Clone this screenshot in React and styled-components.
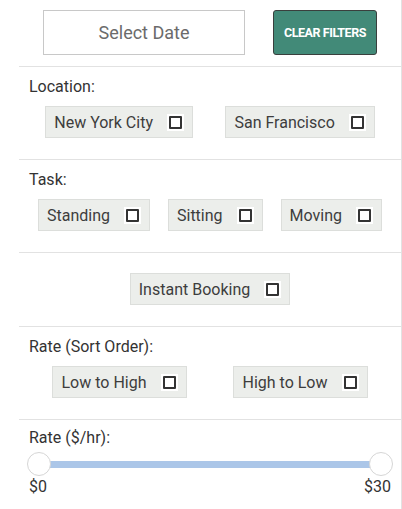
import styled, { createGlobalStyle } from "styled-components";

const Global = createGlobalStyle`
  body {
    margin: 0;
    background: #fff;
    font-family: Roboto, "Liberation Sans", sans-serif;
    color: #333;
  }
`;

export default function App() {
  return (
    <>
      <Global />
      <Panel>
        <Top>
          <DateButton>Select Date</DateButton>
          <ClearButton>CLEAR FILTERS</ClearButton>
        </Top>

        <Section>
          <Label>Location:</Label>
          <Options>
            <Option text="New York City" />
            <Option text="San Francisco" />
          </Options>
        </Section>

        <Section>
          <Label>Task:</Label>
          <Options>
            <Option text="Standing" />
            <Option text="Sitting" />
            <Option text="Moving" />
          </Options>
        </Section>

        <Section pad="20px 10px 21px">
          <Options center>
            <Option text="Instant Booking" />
          </Options>
        </Section>

        <Section>
          <Label>Rate (Sort Order):</Label>
          <Options>
            <Option text="Low to High" />
            <Option text="High to Low" />
          </Options>
        </Section>

        <Section pad="8px 10px 9px">
          <Label>Rate ($/hr):</Label>
          <Slider>
            <Track />
            <Thumb style={{ left: 0 }} />
            <Thumb style={{ right: 0 }} />
          </Slider>
          <Ends>
            <span>$0</span>
            <span>$30</span>
          </Ends>
        </Section>
      </Panel>
    </>
  );
}

function Option({ text }) {
  return (
    <Chip>
      {text}
      <Box />
    </Chip>
  );
}

const Panel = styled.div`
  margin-left: 19px;
  width: 383px;
  height: 509px;
  box-sizing: border-box;
  border-right: 1px solid #e2e2e2;
`;

const Top = styled.div`
  display: flex;
  justify-content: center;
  gap: 28px;
  padding: 10px 0 11px;
`;

const DateButton = styled.div`
  width: 202px;
  height: 45px;
  box-sizing: border-box;
  border: 1px solid #c8c8c8;
  display: flex;
  align-items: center;
  justify-content: center;
  font-size: 18px;
  color: #6b6b6b;
`;

const ClearButton = styled.div`
  width: 104px;
  height: 45px;
  box-sizing: border-box;
  background: #428a78;
  border: 1px solid #3a3f3d;
  border-radius: 3px;
  display: flex;
  align-items: center;
  justify-content: center;
  color: #fff;
  font-size: 12.5px;
  font-weight: 700;
  letter-spacing: -0.45px;
`;

const Section = styled.div`
  border-top: 1px solid #e2e2e2;
  padding: ${(p) => p.pad || "10px 10px 21px"};
`;

const Label = styled.div`
  font-size: 16px;
  line-height: 20px;
  color: #333;
`;

const Options = styled.div`
  display: flex;
  justify-content: ${(p) => (p.center ? "center" : "space-around")};
  margin-top: ${(p) => (p.center ? "0" : "9px")};
`;

const Chip = styled.div`
  display: flex;
  align-items: center;
  gap: 14px;
  height: 32px;
  box-sizing: border-box;
  padding: 0 8px;
  background: #eceeeb;
  border: 1px solid #dcdedb;
  font-size: 16px;
  color: #3d3d3d;
`;

const Box = styled.span`
  width: 17px;
  height: 17px;
  background: #fff;
  display: flex;
  align-items: center;
  justify-content: center;
  &::after {
    content: "";
    width: 9px;
    height: 9px;
    border: 2px solid #333;
    border-radius: 1px;
  }
`;

const Slider = styled.div`
  position: relative;
  height: 24px;
  margin: 4px -2px 0;
  display: flex;
  align-items: center;
`;

const Track = styled.div`
  flex: 1;
  margin: 0 12px;
  height: 7px;
  background: #abc6e8;
`;

const Thumb = styled.div`
  position: absolute;
  top: 0;
  width: 24px;
  height: 24px;
  box-sizing: border-box;
  border-radius: 50%;
  background: #fff;
  border: 1px solid #d6d6d6;
`;

const Ends = styled.div`
  display: flex;
  justify-content: space-between;
  margin-top: 1px;
  font-size: 16px;
  line-height: 20px;
  color: #333;
`;
